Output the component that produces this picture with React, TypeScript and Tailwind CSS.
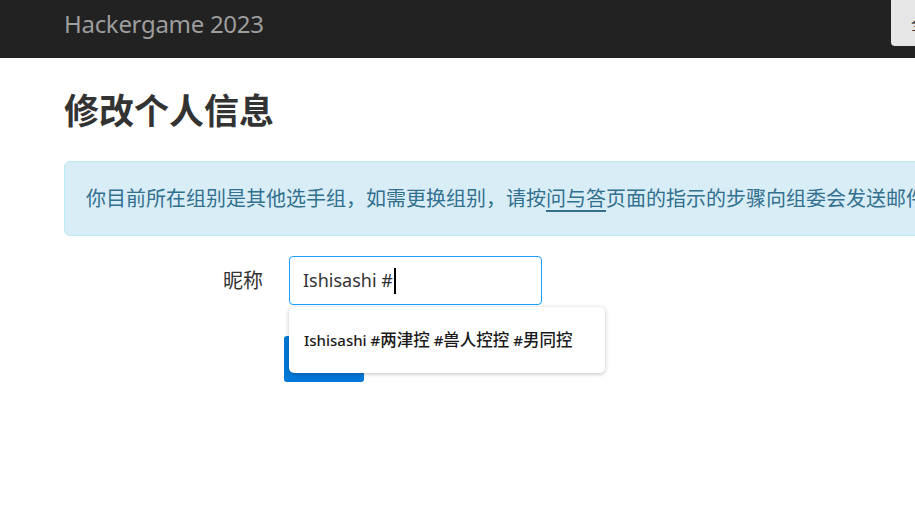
const cjk = "font-['Segoe_UI','Noto_Sans','Noto_Sans_CJK_SC',sans-serif]";

const Navbar = () => (
  <div className="flex h-[58px] w-[1000px] bg-[#222222]">
    <div className="flex-1 pl-16 pt-[9px]">
      <span className="text-[24px] leading-[30px] text-[#9d9d9d] tracking-[-0.3px]">Hackergame 2023</span>
    </div>
    <div className="mr-[49px] h-[46px] w-[60px] shrink-0 rounded-bl-[4px] bg-[#e6e6e6] pl-[20px] pt-[12px] text-[16px] text-[#333]">
      全部
    </div>
  </div>
);

const InfoAlert = () => (
  <div className="ml-16 mt-[28px] flex h-[75px] w-[1000px] items-center whitespace-nowrap rounded-[6px] border border-[#bce8f1] bg-[#d9edf7] pl-[21px] text-[20px] text-[#31708f]">
    你目前所在组别是其他选手组，如需更换组别，请按
    <a className="underline underline-offset-[4px]">问与答</a>
    页面的指示的步骤向组委会发送邮件。
  </div>
);

const NicknameForm = () => (
  <div className="ml-16 mt-5">
    <div className="flex items-center">
      <label className="w-[225px] pr-[26px] text-right text-[20px] text-[#333]">昵称</label>
      <div className="relative">
        <div className="flex h-[49px] w-[253px] items-center rounded-[4px] border border-[#1a9fff] pl-[13px] text-[18px] text-[#333]">
          <span>Ishisashi #</span>
          <span className="ml-[1px] inline-block h-[26px] w-[2px] bg-black"></span>
        </div>
        <div className="absolute left-0 top-[51px] z-10 flex h-[66px] w-[316px] items-center rounded-[5px] bg-white pl-[15px] text-[15px] font-medium text-[#1a1a1a] shadow-[0_1px_4px_rgba(0,0,0,0.25)]">
          Ishisashi #<span className="text-[16.5px]">两津控</span>&nbsp;#<span className="text-[16.5px]">兽人控控</span>&nbsp;#<span className="text-[16.5px]">男同控</span>
        </div>
      </div>
    </div>
    <button className="ml-[220px] mt-[31px] h-[46px] w-[80px] rounded-[3px] bg-[#0078d7] text-[18px] text-white">
      保存
    </button>
  </div>
);

export default function App() {
  return (
    <div className={`h-[522px] w-full overflow-hidden bg-white ${cjk}`}>
      <Navbar />
      <h2 className="ml-16 mt-[31px] text-[35px] font-bold leading-[44px] text-[#333]">修改个人信息</h2>
      <InfoAlert />
      <NicknameForm />
    </div>
  );
}
